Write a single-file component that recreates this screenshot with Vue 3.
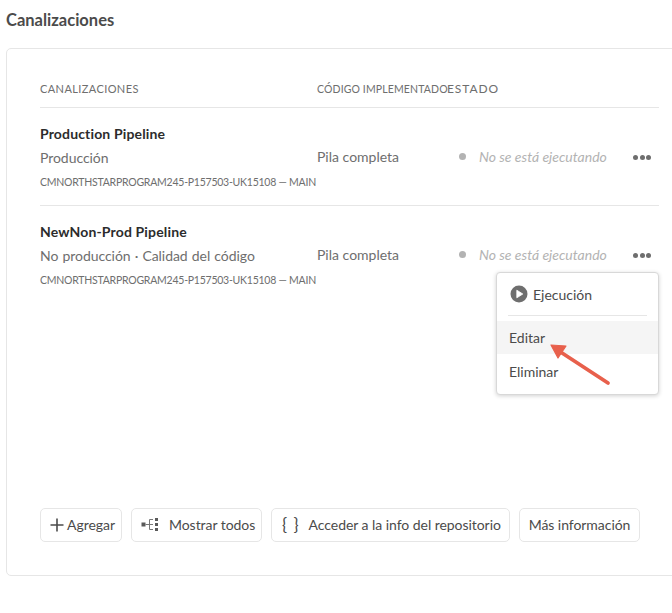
<script setup>
const pipelines = [
  { name: 'Production Pipeline', type: 'Producción', repo: 'CMNORTHSTARPROGRAM245-P157503-UK15108 — MAIN' },
  { name: 'NewNon-Prod Pipeline', type: 'No producción · Calidad del código', repo: 'CMNORTHSTARPROGRAM245-P157503-UK15108 — MAIN' }
]
</script>

<template>
  <div class="page">
    <h1 class="title">Canalizaciones</h1>
    <div class="card">
      <div class="head">
        <span class="col-name head-name">CANALIZACIONES</span>
        <span class="col-code head-code">CÓDIGO IMPLEMENTADO</span>
        <span class="head-status">ESTADO</span>
      </div>
      <div class="row" :class="{ last: i === 1 }" v-for="(p, i) in pipelines" :key="i">
        <div class="col-name">
          <div class="name">{{ p.name }}</div>
          <div class="type">{{ p.type }}</div>
          <div class="repo">{{ p.repo }}</div>
        </div>
        <div class="col-code stack">Pila completa</div>
        <div class="status">
          <span class="dot"></span>
          <span class="status-text">No se está ejecutando</span>
        </div>
        <div class="more"><i></i><i></i><i></i></div>

        <div v-if="i === 1" class="menu">
          <div class="menu-run">
            <svg width="18" height="18" viewBox="0 0 18 18">
              <circle cx="9" cy="9" r="8.5" fill="#6e6e6e" />
              <path d="M6.8 5.2 L12.8 9 L6.8 12.8 Z" fill="#fff" stroke="#fff" stroke-width="0.8" stroke-linejoin="round" />
            </svg>
            Ejecución
          </div>
          <div class="menu-sep"></div>
          <div class="menu-item hover">Editar</div>
          <div class="menu-item">Eliminar</div>
          <svg class="arrow" width="64" height="48" viewBox="0 0 64 48">
            <path d="M10 8 L59 40" stroke="#e8604c" stroke-width="3.8" fill="none" stroke-linecap="round" />
            <path d="M2 2 L17 3 L9 15 Z" fill="#e8604c" stroke="#e8604c" stroke-width="1.2" stroke-linejoin="round" />
          </svg>
        </div>
      </div>
      <div class="actions">
        <button class="btn btn-add">
          <svg width="14" height="14" viewBox="0 0 14 14">
            <path d="M7 .5v13M.5 7h13" stroke="#4b4b4b" stroke-width="1.6" fill="none" />
          </svg>
          Agregar
        </button>
        <button class="btn btn-show">
          <svg width="18" height="14" viewBox="0 0 18 14">
            <rect x="0.5" y="4.5" width="4" height="4" fill="#5a5a5a" />
            <path d="M4.5 6.5H12M8.5 6.5V1.5H12M8.5 6.5V11.5H12" stroke="#777" stroke-width="1" fill="none" />
            <rect x="14" y="0" width="3" height="3" fill="#5a5a5a" />
            <rect x="14" y="5" width="3" height="3" fill="#5a5a5a" />
            <rect x="14" y="10" width="3" height="3" fill="#5a5a5a" />
          </svg>
          Mostrar todos
        </button>
        <button class="btn btn-repo">
          <span class="braces">{ }</span>
          Acceder a la info del repositorio
        </button>
        <button class="btn btn-more">Más información</button>
      </div>
    </div>
  </div>
</template>

<style>
html, body {
  background: #fff;
}
</style>

<style scoped>
.page {
  width: 672px;
  height: 613px;
  overflow: hidden;
  font-family: Lato, "Open Sans", sans-serif;
  color: #4b4b4b;
  box-sizing: border-box;
  padding: 10px 0 0 6px;
}

.title {
  margin: 0;
  font-size: 16.5px;
  line-height: 20px;
  font-weight: 700;
  color: #4b4b4b;
}

.card {
  margin-top: 18px;
  width: 680px;
  height: 528px;
  box-sizing: border-box;
  border: 1px solid #e6e6e6;
  border-radius: 5px;
  padding: 28px 0 33px 33px;
  display: flex;
  flex-direction: column;
}

.head {
  width: 619px;
  height: 31px;
  flex-shrink: 0;
  box-sizing: border-box;
  display: flex;
  line-height: 24px;
  color: #6e6e6e;
  border-bottom: 1px solid #e6e6e6;
}

.head-name {
  font-size: 11px;
  letter-spacing: 0.4px;
}

.head-code {
  font-size: 10.5px;
  letter-spacing: 0.13px;
}

.head-status {
  font-size: 12px;
  letter-spacing: 0.9px;
}

.col-name {
  width: 277px;
  flex-shrink: 0;
}

.col-code {
  width: 130px;
  flex-shrink: 0;
  white-space: nowrap;
}

.row {
  position: relative;
  width: 619px;
  height: 97px;
  flex-shrink: 0;
  display: flex;
  border-bottom: 1px solid #e6e6e6;
}

.row.last {
  border-bottom: none;
}

.name {
  margin-top: 16px;
  font-size: 14px;
  line-height: 20px;
  letter-spacing: 0.15px;
  font-weight: 700;
  color: #2c2c2c;
}

.type {
  margin-top: 4px;
  font-size: 14px;
  line-height: 20px;
  color: #6e6e6e;
  word-spacing: 0.6px;
  letter-spacing: -0.05px;
}

.repo {
  margin-top: 6px;
  font-size: 10.5px;
  line-height: 16px;
  color: #6e6e6e;
  white-space: nowrap;
  letter-spacing: -0.24px;
}

.stack {
  margin-top: 39px;
  font-size: 14px;
  line-height: 20px;
  color: #6e6e6e;
}

.status {
  margin-top: 38px;
  margin-left: 12px;
  height: 20px;
  display: flex;
  align-items: center;
  width: 174px;
}

.dot {
  width: 7px;
  height: 7px;
  border-radius: 50%;
  background: #b3b3b3;
  margin-right: 13px;
}

.status-text {
  font-size: 14px;
  font-style: italic;
  color: #b3b3b3;
  white-space: nowrap;
}

.more {
  margin-top: 47px;
  height: 6px;
  display: flex;
  gap: 1.5px;
}

.more i {
  width: 5px;
  height: 5px;
  border-radius: 50%;
  background: #6e6e6e;
}

.menu {
  position: absolute;
  top: 66px;
  left: 456px;
  width: 163px;
  height: 123px;
  box-sizing: border-box;
  background: #fff;
  border: 1px solid #d8d8d8;
  border-radius: 4px;
  box-shadow: 0 1px 4px rgba(0, 0, 0, 0.18);
  font-size: 14px;
  color: #4b4b4b;
}

.menu-run {
  height: 42px;
  display: flex;
  align-items: center;
  gap: 5px;
  padding-left: 13px;
}

.menu-sep {
  height: 1px;
  margin: 0 11px;
  background: #e6e6e6;
}

.menu-item {
  height: 35px;
  line-height: 35px;
  padding-left: 12px;
}

.menu-item.hover {
  height: 33px;
  line-height: 34px;
  margin-top: 5px;
  background: #f5f5f5;
}

.arrow {
  position: absolute;
  left: 52px;
  top: 70px;
}

.actions {
  display: flex;
  gap: 9px;
  margin-top: auto;
}

.btn {
  height: 34px;
  box-sizing: border-box;
  display: flex;
  align-items: center;
  background: #fff;
  border: 1px solid #e6e6e6;
  border-radius: 5px;
  font-family: inherit;
  font-size: 14px;
  color: #4b4b4b;
  padding: 0 0 1px;
  white-space: nowrap;
  letter-spacing: -0.05px;
}

.btn-add {
  width: 82px;
  padding-left: 9px;
  gap: 3px;
}

.btn-show {
  width: 131px;
  padding-left: 9px;
  gap: 10px;
}

.btn-repo {
  width: 239px;
  padding-left: 10px;
  gap: 9px;
}

.braces {
  font-size: 17px;
  letter-spacing: 1px;
  color: #4b4b4b;
}

.btn-more {
  width: 121px;
  justify-content: center;
}
</style>
